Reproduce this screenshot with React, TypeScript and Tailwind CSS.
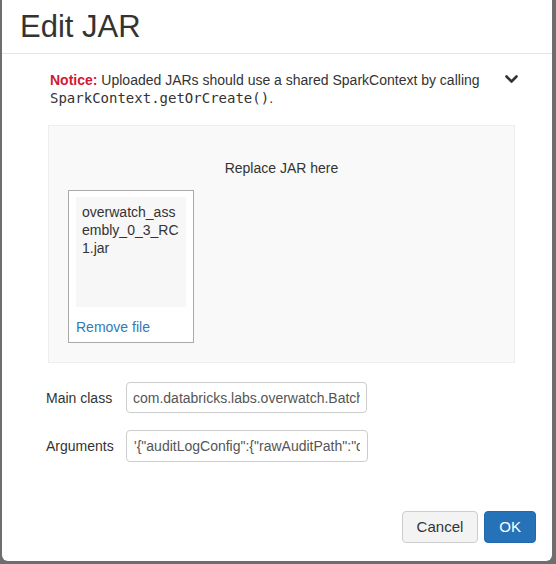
import React from 'react';

const ChevronDown: React.FC = () => (
  <svg width="13" height="9" viewBox="0 0 13 9" className="block">
    <polyline points="1.5,1.5 6.5,6.5 11.5,1.5" fill="none" stroke="#333" strokeWidth="2.6" strokeLinecap="round" strokeLinejoin="round" />
  </svg>
);

export default function App() {
  return (
    <div className="h-[564px] w-[556px] overflow-hidden bg-[#6e6e6e] font-['Liberation_Sans',Arial,sans-serif] text-[#333]">
      <div className="ml-[2px] flex h-[561px] w-[550px] flex-col rounded-b-[6px] bg-white">
        {/* header */}
        <div className="h-[54px] border-b border-[#e5e5e5] pl-[18px] pt-[12px]">
          <h3 className="text-[31px] leading-[30px] text-[#333]">Edit JAR</h3>
        </div>

        {/* body */}
        <div className="pl-[46px] pr-[37px] pt-[17px]">
          <div className="flex items-start pl-[2px]">
            <p className="flex-1 pr-[10px] text-[14px] leading-[18px]">
              <span className="font-bold text-[#d11a35]">Notice:</span> Uploaded JARs should use a shared SparkContext by calling{' '}
              <code className="font-['DejaVu_Sans_Mono',monospace] text-[14px]">SparkContext.getOrCreate()</code>.
            </p>
            <div className="mr-[-3px] mt-[4px]">
              <ChevronDown />
            </div>
          </div>

          <div className="mt-[18px] h-[238px] border border-[#eee] bg-[#f9f9f9] pl-[19px] pt-[32px]">
            <div className="pr-[19px] text-center text-[14px] leading-[20px]">Replace JAR here</div>
            <div className="mt-[12px] h-[153px] w-[126px] border border-[#aaa] bg-white px-[7px] pt-[6px]">
              <div className="h-[110px] w-[110px] break-all bg-[#f7f7f7] px-[6px] pt-[6px] text-[14px] leading-[18px]">
                overwatch_assembly_0_3_RC1.jar
              </div>
              <a className="mt-[10px] block text-[14px] leading-[20px] text-[#337ab7]" href="#">
                Remove file
              </a>
            </div>
          </div>

          <div className="-ml-[2px] mt-[19px] flex flex-col gap-[17px]">
            <div className="flex items-center">
              <label className="w-[80px] text-[14px] leading-[20px]">Main class</label>
              <input
                className="h-[31px] w-[241px] rounded-[4px] border border-[#ccc] px-[6px] text-[14px] text-[#555] outline-none"
                defaultValue="com.databricks.labs.overwatch.BatchRunner"
              />
            </div>
            <div className="flex items-center">
              <label className="w-[80px] text-[14px] leading-[20px]">Arguments</label>
              <input
                className="h-[32px] w-[242px] rounded-[4px] border border-[#ccc] px-[7px] text-[14px] text-[#555] outline-none"
                defaultValue={`'{"auditLogConfig":{"rawAuditPath":"dbfs:/mnt/logs"}}'`}
              />
            </div>
          </div>
        </div>

        {/* footer */}
        <div className="mt-auto flex justify-end gap-[6px] pb-[18px] pr-[16px]">
          <button className="h-[32px] rounded-[4px] border border-[#ccc] bg-[#f3f3f3] px-[14px] text-[15px] text-[#333]">
            Cancel
          </button>
          <button className="h-[32px] rounded-[4px] border border-[#2168ad] bg-[#2572b9] px-[14px] text-[15px] text-white">
            OK
          </button>
        </div>
      </div>
    </div>
  );
}
